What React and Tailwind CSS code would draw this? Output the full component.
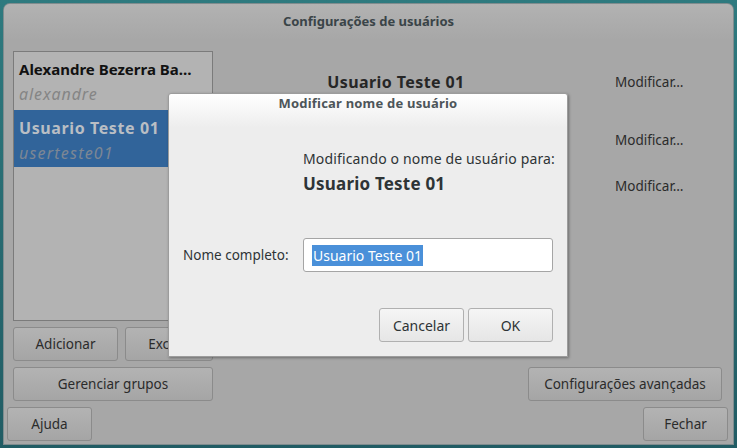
import React from "react";

function Btn({ children, className = "" }) {
  return (
    <div
      className={
        "h-[34px] flex items-center justify-center rounded-[3px] border border-[#8b8b8b] bg-gradient-to-b from-[#b3b3b3] to-[#a5a5a5] text-[13.5px] text-[#2b2b2b] " +
        className
      }
    >
      {children}
    </div>
  );
}

function DBtn({ children }) {
  return (
    <div className="w-[85px] h-[34px] flex items-center justify-center rounded-[3px] border border-[#b0b0b0] bg-gradient-to-b from-[#f5f5f5] to-[#e6e6e6] text-[14px] text-[#2e3436]">
      {children}
    </div>
  );
}

export default function App() {
  return (
    <div className="relative w-[737px] h-[448px] overflow-hidden bg-gradient-to-b from-[#2e7a7f] to-[#215c64] pt-[4px] px-[4px] font-['Noto_Sans','DejaVu_Sans',sans-serif]">
      {/* main window */}
      <div className="w-[729px] h-[440px] rounded-t-[6px] bg-[#a7a7a7] ring-1 ring-[#7f8c8e] flex flex-col">
        <div className="h-[36px] shrink-0 rounded-t-[6px] bg-gradient-to-b from-[#b2b2b2] to-[#a7a7a7] flex items-center justify-center text-[13px] font-bold text-[#3a4448]">
          Configurações de usuários
        </div>
        <div className="flex pl-[9px] pr-[11px] pt-[11px]">
          {/* left column */}
          <div className="w-[200px] flex flex-col gap-[6px]">
            <div className="h-[270px] border border-[#7b7b7b] bg-[#b3b3b3] flex flex-col">
              <div className="h-[58px] pl-[5px] pt-[7px] flex flex-col">
                <div className="h-[20px] leading-[20px] text-[15px] font-bold text-[#111] whitespace-nowrap">
                  Alexandre Bezerra Ba…
                </div>
                <div className="mt-[3px] h-[24px] leading-[24px] text-[16px] italic tracking-[0.9px] text-[#858585]">
                  alexandre
                </div>
              </div>
              <div className="h-[57px] bg-[#31649a] pl-[5px] pt-[8px] flex flex-col">
                <div className="h-[20px] leading-[20px] text-[16px] font-bold tracking-[0.6px] text-[#b9bec4] whitespace-nowrap">
                  Usuario Teste 01
                </div>
                <div className="mt-[3px] h-[24px] leading-[24px] text-[16px] italic tracking-[1.2px] text-[#7d8794]">
                  userteste01
                </div>
              </div>
            </div>
            <div className="flex gap-[7px]">
              <Btn className="w-[105px]">Adicionar</Btn>
              <Btn className="flex-1">Excluir</Btn>
            </div>
            <Btn className="w-full">Gerenciar grupos</Btn>
          </div>
          {/* right column */}
          <div className="flex-1 flex flex-col">
            <div className="h-[62px] flex items-center">
              <div className="flex-1 pr-[36px] text-center text-[16px] font-bold tracking-[0.4px] text-[#262626]">
                Usuario Teste 01
              </div>
              <div className="w-[107px] text-[13.5px] text-[#2b2b2b]">Modificar…</div>
            </div>
            <div className="h-[54px] flex items-center">
              <div className="flex-1" />
              <div className="w-[107px] text-[13.5px] text-[#2b2b2b]">Modificar…</div>
            </div>
            <div className="h-[38px] flex items-center">
              <div className="flex-1" />
              <div className="w-[107px] text-[13.5px] text-[#2b2b2b]">Modificar…</div>
            </div>
            <div className="mt-auto flex justify-end">
              <Btn className="w-[194px]">Configurações avançadas</Btn>
            </div>
          </div>
        </div>
        <div className="flex justify-between pl-[3px] pr-[5px] mt-[6px]">
          <Btn className="w-[85px]">Ajuda</Btn>
          <Btn className="w-[85px]">Fechar</Btn>
        </div>
      </div>

      {/* modal dialog */}
      <div className="absolute left-[168px] top-[93px] w-[400px] h-[264px] rounded-t-[3px] border border-[#9c9c9c] bg-[linear-gradient(to_bottom,#ffffff_0px,#ededed_34px)] shadow-[1px_1px_3px_rgba(0,0,0,0.35)] flex flex-col">
        <div className="h-[20px] shrink-0 flex items-center justify-center text-[13px] font-bold tracking-[0.2px] text-[#4d5559]">
          Modificar nome de usuário
        </div>
        <div className="pl-[134px] mt-[35px] flex flex-col">
          <div className="h-[20px] leading-[20px] text-[14px] tracking-[0.15px] text-[#2e3436] whitespace-nowrap">
            Modificando o nome de usuário para:
          </div>
          <div className="mt-[4px] h-[22px] leading-[22px] text-[17px] font-bold tracking-[0.2px] text-[#2e3436]">
            Usuario Teste 01
          </div>
        </div>
        <div className="mt-[43px] flex items-center">
          <div className="w-[134px] pl-[14px] text-[13.5px] text-[#2e3436]">Nome completo:</div>
          <div className="w-[250px] h-[34px] rounded-[3px] border border-[#a5a5a5] bg-white flex items-center pl-[8px]">
            <span className="bg-[#4a90d9] text-white text-[14px] leading-[21px] px-[1px]">
              Usuario Teste 01
            </span>
          </div>
        </div>
        <div className="mt-[36px] flex justify-end gap-[4px] pr-[14px]">
          <DBtn>Cancelar</DBtn>
          <DBtn>OK</DBtn>
        </div>
      </div>
    </div>
  );
}
